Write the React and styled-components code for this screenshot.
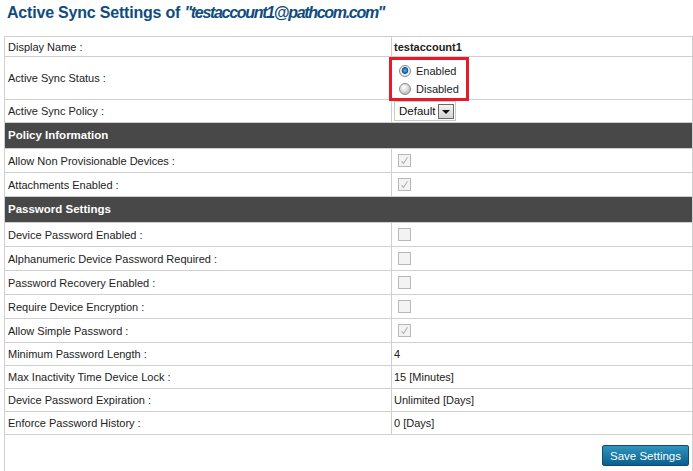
import React from "react";
import styled, { createGlobalStyle } from "styled-components";

const FONT = `"Liberation Sans", Arimo, Arial, Helvetica, sans-serif`;

const Global = createGlobalStyle`
  html, body { margin: 0; padding: 0; background: #fff; }
  body { font-family: ${FONT}; font-size: 11px; color: #222; }
`;

const Page = styled.div`
  width: 693px;
  height: 471px;
  overflow: hidden;
  font-family: ${FONT};
  font-size: 11px;
`;

const Title = styled.h1`
  margin: 0;
  padding: 3px 0 0 7px;
  height: 36px;
  box-sizing: border-box;
  font-family: ${FONT};
  font-size: 16px;
  line-height: 20px;
  letter-spacing: -0.2px;
  font-weight: bold;
  color: #0e4c7e;
  em { font-style: italic; letter-spacing: -1.3px; }
`;

const Panel = styled.div`
  margin-left: 4px;
  border-left: 1px solid #cfcfcf;
  border-right: 1px solid #cfcfcf;
  height: 435px;
  box-sizing: border-box;
`;

const Grid = styled.div`
  border-top: 1px solid #cfcfcf;
  display: flex;
  flex-direction: column;
`;

const Row = styled.div`
  display: grid;
  grid-template-columns: 387px 1fr;
  height: ${(p) => p.$h}px;
  box-sizing: border-box;
  border-bottom: 1px solid #cfcfcf;
`;

const Label = styled.div`
  display: flex;
  align-items: center;
  padding-left: 3px;
  border-right: 1px solid #cfcfcf;
  color: #222;
  font-family: ${FONT};
  font-size: 11px;
`;

const Value = styled.div`
  display: flex;
  align-items: center;
  padding-left: 2px;
  position: relative;
  color: #222;
  font-family: ${FONT};
  font-size: 11px;
  font-weight: ${(p) => (p.$bold ? "bold" : "normal")};
`;

const Header = styled.div`
  height: ${(p) => p.$h}px;
  box-sizing: border-box;
  display: flex;
  align-items: center;
  background: #484848;
  color: #fff;
  font-weight: bold;
  font-family: ${FONT};
  font-size: 11.5px;
  padding: 0 0 1px 3px;
  border-bottom: 1px solid #cfcfcf;
`;

const RadioGroup = styled.div`
  display: flex;
  flex-direction: column;
  gap: 1px;
  padding: 3px 0 0 5px;
`;

const RadioLine = styled.label`
  display: flex;
  align-items: center;
  gap: 5px;
  height: 17px;
`;

const RadioDot = styled.span`
  width: 10px;
  height: 10px;
  border-radius: 50%;
  border: 1px solid #8a8a8a;
  background: ${(p) =>
    p.$on
      ? "radial-gradient(circle at 50% 45%, #5cc0f2 0, #1a78bd 2px, #0b4f8a 3px, #e4e4e4 3.6px, #f6f6f6 6px)"
      : "radial-gradient(circle at 40% 35%, #ffffff 0, #e6e6e6 3px, #c4c4c4 6px)"};
`;

const Highlight = styled.div`
  position: absolute;
  left: -3px;
  top: 0;
  width: 80px;
  height: 44px;
  box-sizing: border-box;
  border: 3px solid #e41c2a;
  pointer-events: none;
`;

const Select = styled.div`
  display: flex;
  align-items: center;
  height: 20px;
  box-sizing: border-box;
  border: 1px solid #c9c9c9;
  background: #fff;
  padding-left: 4px;
  color: #111;
  font-size: 11.5px;
`;

const SelectArrow = styled.span`
  width: 16px;
  height: 15px;
  margin: 0 1px 0 3px;
  border: 1px solid #6a6a6a;
  background: linear-gradient(#f4f4f4, #d2d2d2);
  display: flex;
  align-items: center;
  justify-content: center;
  box-sizing: border-box;
  &::after {
    content: "";
    border-left: 4px solid transparent;
    border-right: 4px solid transparent;
    border-top: 4px solid #111;
    margin-top: 2px;
  }
`;

const Check = styled.span`
  display: flex;
  width: 13px;
  height: 13px;
  box-sizing: border-box;
  border: 1px solid #b8b8b8;
  background: #f3f3f3;
  margin-left: 4px;
  align-items: center;
  justify-content: center;
`;

const Footer = styled.div`
  display: flex;
  justify-content: flex-end;
  padding: 10px 3px 0 0;
`;

const SaveButton = styled.button`
  font-family: ${FONT};
  font-size: 11.5px;
  color: #fff;
  height: 21px;
  width: 87px;
  border: 1px solid #0b4d73;
  border-radius: 2px;
  background: linear-gradient(#2f95bd, #0a5f8e);
  padding: 0;
`;

const CheckBox = ({ checked }) => (
  <Check>
    {checked && (
      <svg width="9" height="9" viewBox="0 0 9 9">
        <path d="M1.5 5 L3.5 7.5 L7.5 1.2" fill="none" stroke="#b5b5b5" strokeWidth="1.2" />
      </svg>
    )}
  </Check>
);

const policy = [
  ["Allow Non Provisionable Devices :", true],
  ["Attachments Enabled :", true],
];

const password = [
  ["Device Password Enabled :", false],
  ["Alphanumeric Device Password Required :", false],
  ["Password Recovery Enabled :", false],
  ["Require Device Encryption :", false],
  ["Allow Simple Password :", true],
];

const texts = [
  ["Minimum Password Length :", "4"],
  ["Max Inactivity Time Device Lock :", "15 [Minutes]"],
  ["Device Password Expiration :", "Unlimited [Days]"],
  ["Enforce Password History :", "0 [Days]"],
];

export default function App() {
  return (
    <Page>
      <Global />
      <Title>
        Active Sync Settings of <em>"testaccount1@pathcom.com"</em>
      </Title>
      <Panel>
        <Grid>
          <Row $h={20}>
            <Label>Display Name :</Label>
            <Value $bold>testaccount1</Value>
          </Row>
          <Row $h={43}>
            <Label>Active Sync Status :</Label>
            <Value>
              <RadioGroup>
                <RadioLine>
                  <RadioDot $on />
                  Enabled
                </RadioLine>
                <RadioLine>
                  <RadioDot />
                  Disabled
                </RadioLine>
              </RadioGroup>
              <Highlight />
            </Value>
          </Row>
          <Row $h={23}>
            <Label>Active Sync Policy :</Label>
            <Value>
              <Select>
                Default
                <SelectArrow />
              </Select>
            </Value>
          </Row>
          <Header $h={26}>Policy Information</Header>
          {policy.map(([l, c]) => (
            <Row $h={24} key={l}>
              <Label>{l}</Label>
              <Value>
                <CheckBox checked={c} />
              </Value>
            </Row>
          ))}
          <Header $h={26}>Password Settings</Header>
          {password.map(([l, c]) => (
            <Row $h={24} key={l}>
              <Label>{l}</Label>
              <Value>
                <CheckBox checked={c} />
              </Value>
            </Row>
          ))}
          {texts.map(([l, v]) => (
            <Row $h={23} key={l}>
              <Label>{l}</Label>
              <Value>{v}</Value>
            </Row>
          ))}
        </Grid>
        <Footer>
          <SaveButton>Save Settings</SaveButton>
        </Footer>
      </Panel>
    </Page>
  );
}
